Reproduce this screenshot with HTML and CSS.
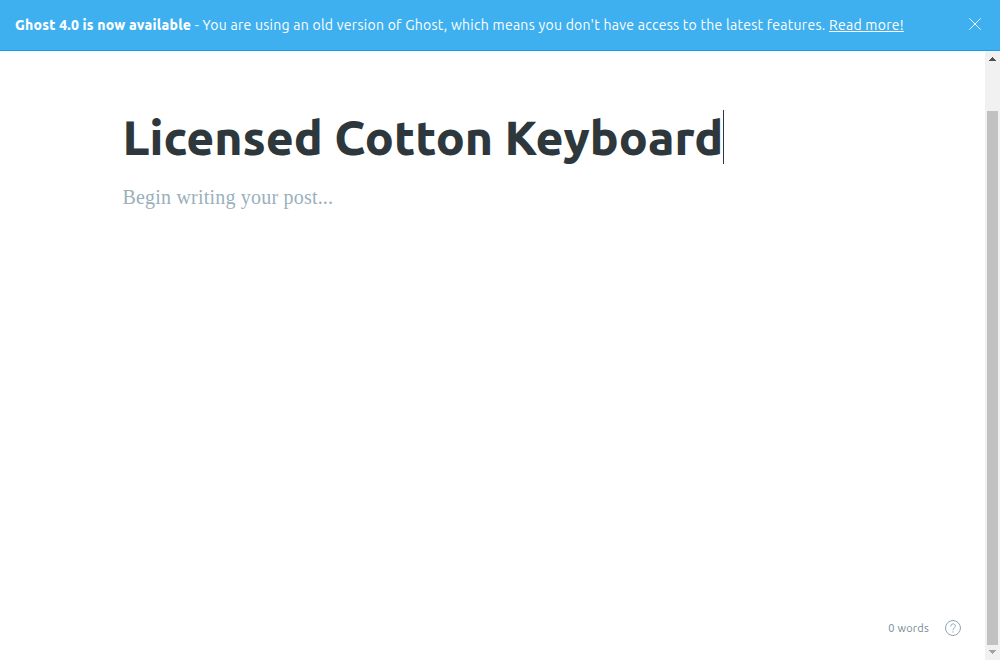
FILE: index.html
```html
<!DOCTYPE html>
<html lang="en">
<head>
<meta charset="utf-8">
<title>Ghost editor</title>
<link rel="stylesheet" href="styles.css">
</head>
<body>
<div class="app">
  <header class="alert">
    <p class="alert-text"><strong class="alert-strong">Ghost 4.0 is now available</strong><span class="alert-body"> - You are using an old version of Ghost, which means you don't have access to the latest features. </span><a class="alert-link" href="#">Read more!</a></p>
    <button class="alert-close" aria-label="Close"><svg width="12" height="12" viewBox="0 0 12 12"><path d="M.3.3l11.4 11.4M11.7.3L.3 11.7" stroke="#fff" stroke-width=".9" fill="none"/></svg></button>
  </header>
  <div class="workspace">
    <main class="editor">
      <div class="title-row"><h1 class="title">Licensed Cotton Keyboard</h1><span class="caret"></span></div>
      <p class="placeholder">Begin writing your post...</p>
      <footer class="status">
        <span class="words">0 words</span>
        <svg class="help" width="16" height="16" viewBox="0 0 16 16" fill="none" stroke="#8da6b3" stroke-linecap="round"><circle cx="8" cy="8" r="7.5"/><path d="M5.7 6.2C5.7 3 10.4 3.1 10.4 6.1C10.4 8 8 7.8 8 9.8" stroke-width=".9"/><circle cx="8" cy="11.9" r=".65" fill="#8da6b3" stroke="none"/></svg>
      </footer>
    </main>
    <div class="scrollbar">
      <svg class="arrow-up" width="7" height="4" viewBox="0 0 7 4" shape-rendering="crispEdges"><path d="M3 0h1v1h1v1h1v1h1v1H0V3h1V2h1V1h1z" fill="#505050"/></svg>
      <div class="thumb"></div>
      <svg class="arrow-down" width="7" height="4" viewBox="0 0 7 4" shape-rendering="crispEdges"><path d="M0 0h7v1H6v1H5v1H4v1H3V3H2V2H1V1H0z" fill="#a3a3a3"/></svg>
    </div>
  </div>
</div>
</body>
</html>
```
FILE: styles.css
```css
* { box-sizing: border-box; }
body { margin: 0; background: #fff; font-family: Ubuntu, "Noto Sans", "Open Sans", sans-serif; }
.app { display: flex; flex-direction: column; height: 660px; overflow: hidden; }
.alert { display: flex; align-items: center; justify-content: space-between; height: 51px; flex: none; padding: 0 19px 2px 15px; background: #3eb0ef; border-bottom: 1px solid #139fec; color: #fff; }
.alert-text { margin: 2px 0 0; font-size: 14px; line-height: 20px; letter-spacing: .27px; white-space: pre; }
.alert-strong { font-weight: 800; letter-spacing: .2px; }
.alert-link { color: #fff; text-decoration: underline; }
.alert-close { display: flex; padding: 0; border: 0; background: none; }
.workspace { display: flex; flex: 1; min-height: 0; }
.editor { display: flex; flex: 1; flex-direction: column; padding: 59px 24px 23px 122.5px; }
.title-row { display: flex; height: 54px; white-space: nowrap; }
.title { margin: 0; width: 600.5px; color: #2e373b; font-size: 48px; font-weight: 800; line-height: 54px; }
.caret { width: 1px; height: 54px; background: #2e373b; }
.placeholder { margin: 17px 0 0; color: #9bb0bc; font-family: "Liberation Serif", serif; font-size: 20px; letter-spacing: .2px; line-height: 32px; }
.status { display: flex; align-items: center; justify-content: flex-end; gap: 16px; height: 18px; margin-top: auto; color: #738a94; font-size: 11px; letter-spacing: .25px; line-height: 18px; }
.scrollbar { display: flex; flex-direction: column; align-items: center; width: 15px; padding: 6px 0; background: #f1f1f1; }
.thumb { width: 11px; height: 534px; margin: 50px 0 5px; background: #c1c1c1; }
.arrow-up, .arrow-down { flex: none; }
```
